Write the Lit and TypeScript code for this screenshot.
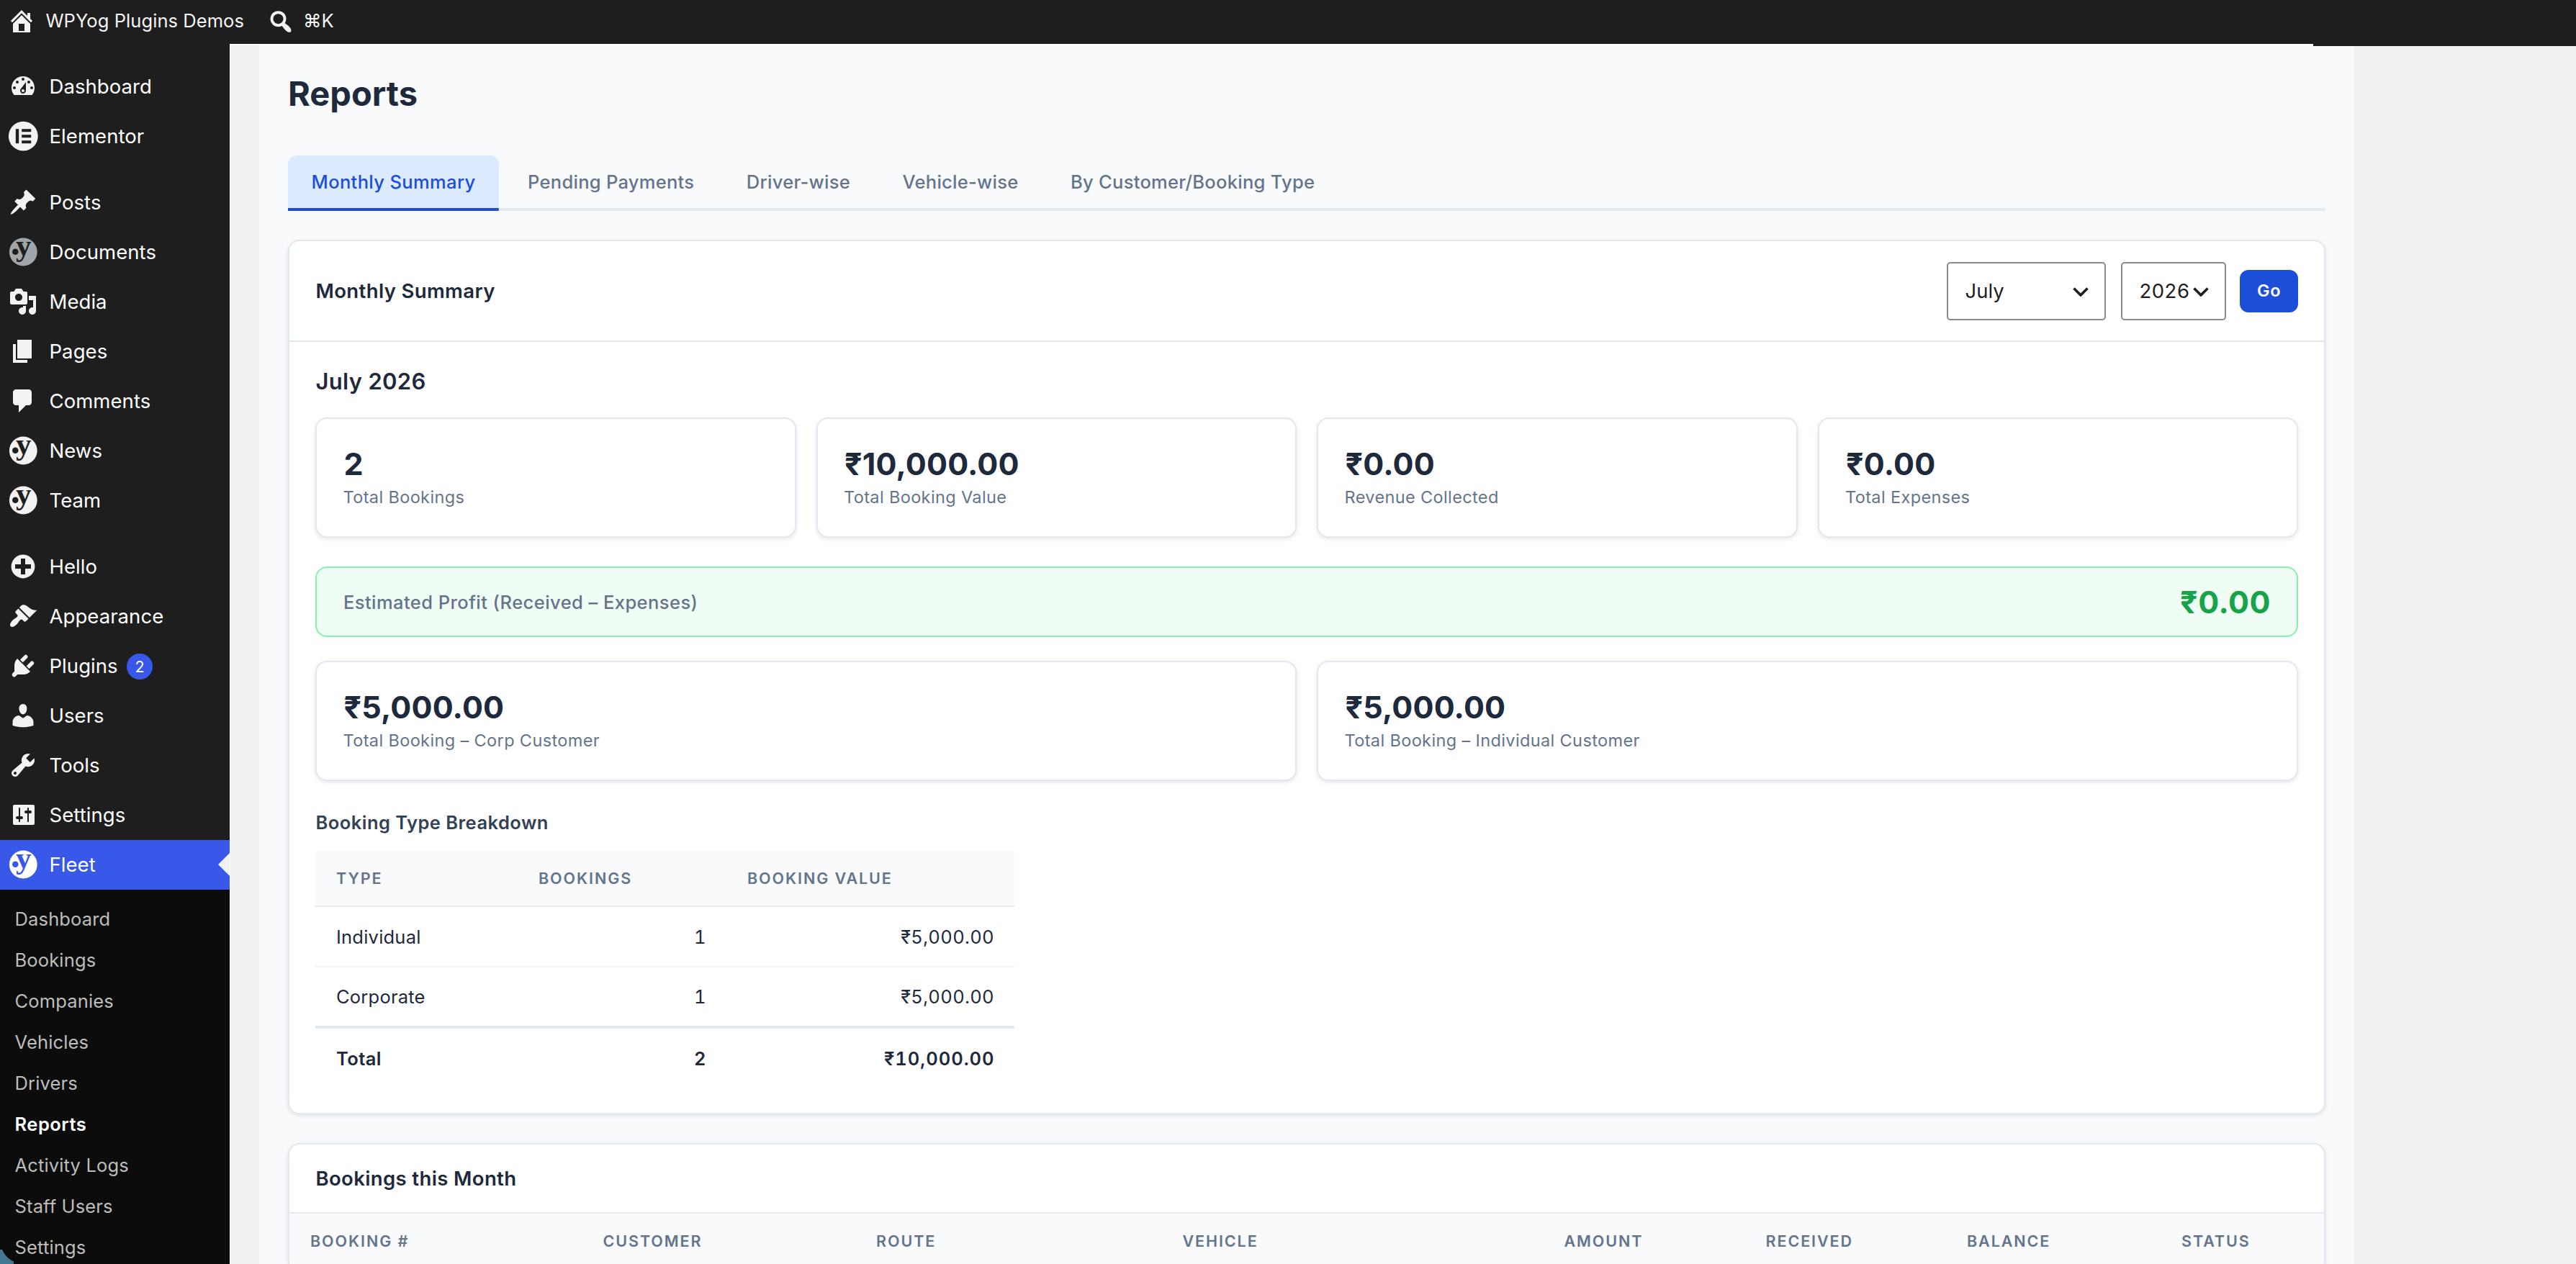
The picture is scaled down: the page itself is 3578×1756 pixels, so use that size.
import { LitElement, html, css, svg, nothing } from "lit";
import { customElement, property } from "lit/decorators.js";
import { classMap } from "lit/directives/class-map.js";

const ICONS: Record<string, string> = {
  home: "M16 8.5l1.53 1.53-1.06 1.06L10 4.6l-6.47 6.49-1.06-1.06L10 2.5l4 4v-2h2v4zm-6-2.46l6 5.99V18H4v-5.97zM12 17v-5H8v5h4z",
  search:
    "M12.14 4.18c1.87 1.87 2.11 4.75.72 6.89.12.1.22.21.36.31.2.16.47.36.81.59.34.24.56.39.66.47.42.31.73.57.94.78.32.32.6.65.84 1 .25.35.44.69.59 1.04.14.35.21.68.18 1-.02.32-.14.59-.36.81s-.49.34-.81.36c-.31.02-.65-.04-.99-.19-.35-.14-.7-.34-1.04-.59-.35-.24-.68-.52-1-.84-.21-.21-.47-.52-.77-.93-.1-.13-.25-.35-.47-.66-.22-.32-.4-.57-.56-.78-.16-.2-.29-.35-.44-.5-2.07 1.09-4.69.76-6.44-.98-2.14-2.15-2.14-5.64 0-7.78 2.15-2.15 5.63-2.15 7.78 0zm-1.41 6.36c1.36-1.37 1.36-3.58 0-4.95-1.37-1.37-3.59-1.37-4.95 0-1.37 1.37-1.37 3.58 0 4.95 1.36 1.37 3.58 1.37 4.95 0z",
  dashboard:
    "M3.76 16h12.48c1.1-1.37 1.76-3.11 1.76-5 0-4.42-3.58-8-8-8s-8 3.58-8 8c0 1.89.66 3.63 1.76 5zM10 4c.55 0 1 .45 1 1s-.45 1-1 1-1-.45-1-1 .45-1 1-1zM6 6c.55 0 1 .45 1 1s-.45 1-1 1-1-.45-1-1 .45-1 1-1zm8 0c.55 0 1 .45 1 1s-.45 1-1 1-1-.45-1-1 .45-1 1-1zm-5.37 5.55L12 7v6c0 1.1-.9 2-2 2s-2-.9-2-2c0-.57.24-1.08.63-1.45zM4 10c.55 0 1 .45 1 1s-.45 1-1 1-1-.45-1-1 .45-1 1-1zm12 0c.55 0 1 .45 1 1s-.45 1-1 1-1-.45-1-1 .45-1 1-1zm-5 3c0-.55-.45-1-1-1s-1 .45-1 1 .45 1 1 1 1-.45 1-1z",
  post: "M10.44 3.02l1.82-1.82 6.36 6.35-1.83 1.82c-1.05-.68-2.48-.57-3.41.36l-.75.75c-.92.93-1.04 2.35-.35 3.41l-1.83 1.82-2.41-2.41-2.8 2.79c-.42.42-3.38 2.71-3.8 2.29s1.86-3.39 2.28-3.81l2.79-2.79L4.1 9.36l1.83-1.82c1.05.69 2.48.57 3.4-.36l.75-.75c.93-.92 1.05-2.35.36-3.41z",
  media:
    "M13 11V4c0-.55-.45-1-1-1h-1.67L9 1H5L3.67 3H2c-.55 0-1 .45-1 1v7c0 .55.45 1 1 1h10c.55 0 1-.45 1-1zM7 4.5c1.38 0 2.5 1.12 2.5 2.5S8.38 9.5 7 9.5 4.5 8.38 4.5 7 5.62 4.5 7 4.5zM14 6h5v10.5c0 1.38-1.12 2.5-2.5 2.5S14 17.88 14 16.5s1.12-2.5 2.5-2.5c.17 0 .34.02.5.05V9h-3V6zm-4 8.05V13h2v3.5c0 1.38-1.12 2.5-2.5 2.5S7 17.88 7 16.5 8.12 14 9.5 14c.17 0 .34.02.5.05z",
  page: "M6 15V2h10v13H6zm-1 1h8v2H3V5h2v11z",
  comments: "M5 2h9c1.1 0 2 .9 2 2v7c0 1.1-.9 2-2 2h-2l-5 5v-5H5c-1.1 0-2-.9-2-2V4c0-1.1.9-2 2-2z",
  plus: "M15.8 4.2c3.2 3.21 3.2 8.39 0 11.6-3.21 3.2-8.39 3.2-11.6 0C1 12.59 1 7.41 4.2 4.2 7.41 1 12.59 1 15.8 4.2zm-4.3 11.3v-4h4v-3h-4v-4h-3v4h-4v3h4v4h3z",
  appearance:
    "M14.48 11.06L7.41 3.99l1.5-1.5c.5-.56 2.3-.47 3.51.32 1.21.8 1.43 1.28 2.91 2.1 1.18.64 2.45 1.26 4.45.85zm-.71.71L6.7 4.7 4.93 6.47c-.39.39-.39 1.02 0 1.41l1.06 1.06c.39.39.39 1.03 0 1.42-.6.6-1.43 1.11-2.21 1.69-.35.26-.7.53-1.01.84C1.43 14.23.4 16.08 1.4 17.07c.99 1 2.84-.03 4.18-1.36.31-.31.58-.66.85-1.02.57-.78 1.08-1.61 1.69-2.21.39-.39 1.02-.39 1.41 0l1.06 1.06c.39.39 1.02.39 1.41 0z",
  plugins:
    "M13.11 4.36L9.87 7.6 8 5.73l3.24-3.24c.35-.34 1.05-.2 1.56.32.52.51.66 1.21.31 1.55zm-8 1.77l.91-1.12 9.01 9.01-1.19.84c-.71.71-2.63 1.16-3.82 1.16H6.14L4.9 17.26c-.59.59-1.54.59-2.12 0-.59-.58-.59-1.53 0-2.12l1.24-1.24v-3.88c0-1.13.4-3.19 1.09-3.89zm7.26 3.97l3.24-3.24c.34-.35 1.04-.21 1.55.31.52.51.66 1.21.31 1.55l-3.24 3.25z",
  users:
    "M10 9.25c-2.27 0-2.73-3.44-2.73-3.44C7 4.02 7.82 2 9.97 2c2.16 0 2.98 2.02 2.71 3.81 0 0-.41 3.44-2.68 3.44zm0 2.57L12.72 10c2.39 0 4.52 2.33 4.52 4.53v2.49s-3.65 1.13-7.24 1.13c-3.65 0-7.24-1.13-7.24-1.13v-2.49c0-2.25 1.94-4.48 4.47-4.48z",
  tools:
    "M16.68 9.77c-1.34 1.34-3.3 1.67-4.95.99l-5.41 6.52c-.99.99-2.59.99-3.58 0s-.99-2.59 0-3.57l6.52-5.42c-.68-1.65-.35-3.61.99-4.95 1.28-1.28 3.12-1.62 4.72-1.06l-2.89 2.89 2.82 2.82 2.86-2.87c.53 1.58.18 3.39-1.08 4.65zM3.81 16.21c.4.39 1.04.39 1.43 0 .4-.4.4-1.04 0-1.43-.39-.4-1.03-.4-1.43 0-.39.39-.39 1.03 0 1.43z",
  settings:
    "M18 16V4c0-.55-.45-1-1-1H4c-.55 0-1 .45-1 1v12c0 .55.45 1 1 1h13c.55 0 1-.45 1-1zM8 11h1c.55 0 1 .45 1 1s-.45 1-1 1H8v1.5c0 .28-.22.5-.5.5s-.5-.22-.5-.5V13H6c-.55 0-1-.45-1-1s.45-1 1-1h1V5.5c0-.28.22-.5.5-.5s.5.22.5.5V11zm5-2h-1c-.55 0-1-.45-1-1s.45-1 1-1h1v-1.500c0-.28.22-.5.5-.5s.5.22.5.5V7h1c.55 0 1 .45 1 1s-.45 1-1 1h-1v5.500c0 .28-.22.5-.5.5s-.5-.22-.5-.5V9z",
};

@customElement("fleet-icon")
class FleetIcon extends LitElement {
  @property() name = "";

  static styles = css`
    :host {
      display: block;
      width: 40px;
      height: 40px;
    }
    svg {
      display: block;
      width: 100%;
      height: 100%;
      overflow: visible;
      fill: currentColor;
    }
    .cut {
      fill: var(--icon-cut, #1e1e1e);
    }
    .mark {
      font-family: "Liberation Serif", serif;
      font-weight: 700;
      font-size: 43px;
    }
  `;

  render() {
    if (this.name === "elementor") {
      return html`<svg viewBox="0 0 40 40">
        <circle cx="20.3" cy="20.2" r="20.4" />
        <g class="cut">
          <rect x="9.8" y="10.2" width="4.4" height="20" />
          <rect x="18.2" y="10.2" width="13" height="4" />
          <rect x="18.2" y="18.2" width="13" height="4" />
          <rect x="18.2" y="26.2" width="13" height="4" />
        </g>
      </svg>`;
    }
    if (this.name === "yoast") {
      return html`<svg viewBox="0 0 40 40">
        <circle cx="20.3" cy="20" r="19.4" />
        <g class="cut">
          <circle cx="9.3" cy="19.8" r="4.3" />
          <text class="mark" x="10" y="24.5">y</text>
        </g>
      </svg>`;
    }
    return html`<svg viewBox="0 0 20 20">${svg`<path d=${ICONS[this.name] ?? ""} />`}</svg>`;
  }
}

interface MenuItem {
  icon: string;
  label: string;
  gapBefore?: boolean;
  badge?: string;
  active?: boolean;
  dim?: boolean;
}

const MENU: MenuItem[] = [
  { icon: "dashboard", label: "Dashboard" },
  { icon: "elementor", label: "Elementor" },
  { icon: "post", label: "Posts", gapBefore: true },
  { icon: "yoast", label: "Documents", dim: true },
  { icon: "media", label: "Media" },
  { icon: "page", label: "Pages" },
  { icon: "comments", label: "Comments" },
  { icon: "yoast", label: "News" },
  { icon: "yoast", label: "Team" },
  { icon: "plus", label: "Hello", gapBefore: true },
  { icon: "appearance", label: "Appearance" },
  { icon: "plugins", label: "Plugins", badge: "2" },
  { icon: "users", label: "Users" },
  { icon: "tools", label: "Tools" },
  { icon: "settings", label: "Settings" },
  { icon: "yoast", label: "Fleet", active: true },
];

const SUBMENU = [
  "Dashboard",
  "Bookings",
  "Companies",
  "Vehicles",
  "Drivers",
  "Reports",
  "Activity Logs",
  "Staff Users",
  "Settings",
];

@customElement("admin-menu")
class AdminMenu extends LitElement {
  static styles = css`
    :host {
      display: flex;
      flex-direction: column;
      width: 319px;
      flex: none;
      background: #1e1e1e;
      color: #fff;
      padding-top: 24px;
      box-sizing: border-box;
    }
    .item {
      display: flex;
      align-items: center;
      height: 69.07px;
      flex: none;
      padding-left: 12px;
      gap: 16px;
      font-size: 27.5px;
      letter-spacing: 0.06px;
      position: relative;
    }
    .item fleet-icon {
      color: #f3f1f1;
    }
    .item.gap {
      margin-top: 23px;
    }
    .item.dim fleet-icon {
      color: #a0a6aa;
    }
    .item.active {
      background: #3858e9;
      --icon-cut: #3858e9;
    }
    .item.active fleet-icon {
      color: #fff;
    }
    .item.active::after {
      content: "";
      position: absolute;
      right: 0;
      top: 50%;
      transform: translateY(-50%);
      border: 16px solid transparent;
      border-right-color: #f0f0f0;
      border-left-width: 0;
    }
    .label {
      white-space: nowrap;
      padding-left: 0.5px;
    }
    .badge {
      margin-left: -4px;
      margin-top: 2px;
      width: 36.5px;
      height: 36.5px;
      border-radius: 50%;
      background: #3858e9;
      display: flex;
      align-items: center;
      justify-content: center;
      font-size: 21.5px;
      letter-spacing: 0;
    }
    .submenu {
      flex: 1;
      background: #0c0c0c;
      padding-top: 12px;
      overflow: hidden;
    }
    .sub {
      height: 57.05px;
      line-height: 57.05px;
      padding-left: 20.5px;
      font-size: 25.5px;
      letter-spacing: 0.15px;
      color: #bdbdbd;
      white-space: nowrap;
    }
    .sub.current {
      color: #fff;
      font-weight: 600;
      letter-spacing: 0.5px;
    }
  `;

  render() {
    return html`
      ${MENU.map(
        (m) => html`<div
          class=${classMap({ item: true, gap: !!m.gapBefore, dim: !!m.dim, active: !!m.active })}
        >
          <fleet-icon name=${m.icon}></fleet-icon>
          <span class="label">${m.label}</span>
          ${m.badge ? html`<span class="badge">${m.badge}</span>` : nothing}
        </div>`
      )}
      <div class="submenu">
        ${SUBMENU.map(
          (s) => html`<div class=${classMap({ sub: true, current: s === "Reports" })}>${s}</div>`
        )}
      </div>
    `;
  }
}

@customElement("stat-card")
class StatCard extends LitElement {
  @property() value = "";
  @property() label = "";

  static styles = css`
    :host {
      display: block;
      box-sizing: border-box;
      height: 167px;
      padding: 36px;
      background: #fff;
      border: 2px solid #e2e8f0;
      border-radius: 16px;
      box-shadow: 0 2px 6px rgba(0, 0, 0, 0.1);
    }
    .value {
      font-size: 43px;
      font-weight: 700;
      line-height: 52px;
      letter-spacing: 0.2px;
      color: #1e293b;
      padding-left: 1.5px;
    }
    .label {
      margin-top: 2px;
      font-size: 23.5px;
      line-height: 38px;
      letter-spacing: 0.37px;
      color: #64748b;
      padding-left: 0.5px;
    }
  `;

  render() {
    return html`<div class="value">${this.value}</div>
      <div class="label">${this.label}</div>`;
  }
}

const chevron = html`<svg class="chevron" viewBox="0 0 22 13">
  <path d="M1.5 1.5 L11 11 L20.5 1.5" />
</svg>`;

@customElement("reports-page")
class ReportsPage extends LitElement {
  static styles = css`
    :host {
      display: block;
      box-sizing: border-box;
      width: 2910px;
      padding: 27px 40px 0;
      background: #f8fafc;
      color: #1e293b;
    }
    .title {
      font-size: 47px;
      font-weight: 700;
      line-height: 80px;
    }
    .tabs {
      display: flex;
      gap: 8px;
      margin-top: 46px;
      border-bottom: 4px solid #e2e8f0;
    }
    .tab {
      padding: 0 32px 0 32.5px;
      line-height: 74px;
      height: 73px;
      border-bottom: 4px solid transparent;
      margin-bottom: -4px;
      border-radius: 12px 12px 0 0;
      font-size: 25.5px;
      font-weight: 500;
      letter-spacing: 0.28px;
      color: #64748b;
      white-space: nowrap;
    }
    .tab.on {
      background: linear-gradient(#1d4ed8, #1d4ed8) bottom / 100% 4px no-repeat border-box, #dbeafe;
      color: #1d4ed8;
      letter-spacing: 0.36px;
    }
    .card {
      margin-top: 40px;
      background: #fff;
      border: 2px solid #e2e8f0;
      border-radius: 16px;
      box-shadow: 0 2px 6px rgba(0, 0, 0, 0.1);
      overflow: hidden;
    }
    .card-head {
      display: flex;
      align-items: center;
      justify-content: space-between;
      height: 138px;
      padding: 0 36px;
      border-bottom: 2px solid #e2e8f0;
    }
    .card-head.short {
      height: 94px;
    }
    .card-title {
      font-size: 27.5px;
      font-weight: 600;
      letter-spacing: 0.37px;
      padding-left: 0.5px;
    }
    .filters {
      display: flex;
      align-items: center;
    }
    .select {
      box-sizing: border-box;
      display: flex;
      align-items: center;
      justify-content: space-between;
      height: 81px;
      border: 2px solid #8a8a8a;
      border-radius: 5px;
      font-size: 27.5px;
      color: #1e1e1e;
      padding: 0 22px 0 23.5px;
    }
    .month {
      width: 221px;
      margin-right: 21px;
    }
    .year {
      width: 146px;
      margin-right: 19px;
      letter-spacing: 0.5px;
    }
    .chevron {
      width: 22px;
      height: 13px;
      fill: none;
      stroke: #1e1e1e;
      stroke-width: 3.6px;
      margin-top: 3px;
    }
    .go {
      width: 81px;
      height: 59px;
      border-radius: 12px;
      background: #1d4ed8;
      color: #fff;
      font-size: 23.5px;
      font-weight: 600;
      line-height: 58px;
      text-align: center;
      letter-spacing: 0.5px;
    }
    .body {
      padding: 32px 36px 35px;
    }
    .period {
      font-size: 31px;
      font-weight: 600;
      line-height: 46px;
      letter-spacing: 0.32px;
      padding-left: 0.5px;
    }
    .stats {
      display: grid;
      grid-template-columns: repeat(4, 1fr);
      gap: 28px;
      margin-top: 27px;
    }
    .stats.two {
      grid-template-columns: repeat(2, 1fr);
      margin-top: 33px;
    }
    .profit {
      display: flex;
      align-items: center;
      justify-content: space-between;
      box-sizing: border-box;
      height: 98px;
      margin-top: 40px;
      padding: 0 36px;
      border: 2px solid #86efac;
      border-radius: 16px;
      background: #f0fdf4;
    }
    .profit-label {
      font-size: 25.5px;
      font-weight: 500;
      letter-spacing: 0.44px;
      color: #64748b;
      padding-left: 1px;
    }
    .profit-value {
      font-size: 43px;
      font-weight: 700;
      letter-spacing: 0.5px;
      color: #16a34a;
    }
    .subhead {
      margin-top: 38px;
      font-size: 25.5px;
      font-weight: 600;
      line-height: 40px;
      letter-spacing: 0.47px;
      color: #334155;
      padding-left: 0.5px;
    }
    .row {
      display: grid;
      align-items: center;
      box-sizing: border-box;
    }
    .head {
      height: 78.5px;
      border-bottom: 2px solid #e2e8f0;
      background: #f8fafc;
      font-size: 21.5px;
      font-weight: 600;
      letter-spacing: 1.92px;
      color: #64748b;
    }
    .row > div {
      padding: 0 28px 0 29px;
      white-space: nowrap;
    }
    .breakdown {
      width: 971px;
      margin-top: 18.5px;
    }
    .breakdown .row {
      grid-template-columns: 281px 290px 400px;
    }
    .data {
      height: 84px;
      border-bottom: 2px solid #f1f5f9;
      font-size: 25.5px;
      letter-spacing: 0.22px;
      color: #1e293b;
    }
    .data .num {
      text-align: right;
      font-variant-numeric: tabular-nums;
      letter-spacing: 0.35px;
    }
    .data.before-total {
      height: 81px;
      border-bottom: 0;
    }
    .data.total {
      height: 86px;
      border-top: 4px solid #e2e8f0;
      border-bottom: 0;
      font-weight: 600;
      letter-spacing: 0.4px;
    }
    .data.total .num {
      letter-spacing: 1px;
      padding-right: 27.5px;
    }
    .bookings {
      grid-template-columns: 406.5px 379.5px 425.5px 530px 280px 279.5px 298px 1fr;
    }
  `;

  private tabs = [
    "Monthly Summary",
    "Pending Payments",
    "Driver-wise",
    "Vehicle-wise",
    "By Customer/Booking Type",
  ];

  private rows = [
    { type: "Individual", count: "1", value: "₹5,000.00", cls: "" },
    { type: "Corporate", count: "1", value: "₹5,000.00", cls: "before-total" },
    { type: "Total", count: "2", value: "₹10,000.00", cls: "total" },
  ];

  private columns = [
    "BOOKING #",
    "CUSTOMER",
    "ROUTE",
    "VEHICLE",
    "AMOUNT",
    "RECEIVED",
    "BALANCE",
    "STATUS",
  ];

  render() {
    return html`
      <div class="title">Reports</div>
      <div class="tabs">
        ${this.tabs.map((t, i) => html`<div class=${classMap({ tab: true, on: i === 0 })}>${t}</div>`)}
      </div>

      <section class="card">
        <div class="card-head">
          <span class="card-title">Monthly Summary</span>
          <div class="filters">
            <div class="select month"><span>July</span>${chevron}</div>
            <div class="select year"><span>2026</span>${chevron}</div>
            <div class="go">Go</div>
          </div>
        </div>
        <div class="body">
          <div class="period">July 2026</div>
          <div class="stats">
            <stat-card value="2" label="Total Bookings"></stat-card>
            <stat-card value="₹10,000.00" label="Total Booking Value"></stat-card>
            <stat-card value="₹0.00" label="Revenue Collected"></stat-card>
            <stat-card value="₹0.00" label="Total Expenses"></stat-card>
          </div>
          <div class="profit">
            <span class="profit-label">Estimated Profit (Received – Expenses)</span>
            <span class="profit-value">₹0.00</span>
          </div>
          <div class="stats two">
            <stat-card value="₹5,000.00" label="Total Booking – Corp Customer"></stat-card>
            <stat-card value="₹5,000.00" label="Total Booking – Individual Customer"></stat-card>
          </div>
          <div class="subhead">Booking Type Breakdown</div>
          <div class="breakdown">
            <div class="row head">
              <div>TYPE</div>
              <div>BOOKINGS</div>
              <div>BOOKING VALUE</div>
            </div>
            ${this.rows.map(
              (r) => html`<div class="row data ${r.cls}">
                <div>${r.type}</div>
                <div class="num">${r.count}</div>
                <div class="num">${r.value}</div>
              </div>`
            )}
          </div>
        </div>
      </section>

      <section class="card">
        <div class="card-head short"><span class="card-title">Bookings this Month</span></div>
        <div class="row head bookings">${this.columns.map((c) => html`<div>${c}</div>`)}</div>
      </section>
    `;
  }
}

@customElement("app-root")
class AppRoot extends LitElement {
  static styles = css`
    :host {
      display: flex;
      flex-direction: column;
      position: relative;
      width: 3578px;
      height: 1756px;
      overflow: hidden;
      background: #f0f0f0;
      font-family: Inter, "Liberation Sans", sans-serif;
      --icon-cut: #1e1e1e;
    }
    .bar {
      display: flex;
      flex: none;
      height: 61px;
      background: #1e1e1e;
      color: #f5f5f5;
      font-size: 25.5px;
      line-height: 58px;
      letter-spacing: 0.07px;
    }
    .bar .home {
      margin: 9px 13px 0 10.4px;
    }
    .bar .find {
      margin: 9.5px 11.5px 0 30.5px;
    }
    .bar fleet-icon {
      color: #f3f1f1;
    }
    .main {
      display: flex;
      flex: 1;
      min-height: 0;
    }
    .content {
      flex: 1;
      border-top: 2px solid #fff;
      border-left: 1px solid #fcfcfc;
      padding-left: 40px;
      min-width: 0;
    }
    .bar-edge {
      position: absolute;
      left: 3213px;
      right: 0;
      top: 61px;
      height: 3px;
      background: #1e1e1e;
    }
    .corner {
      position: absolute;
      left: 0;
      bottom: 0;
      width: 19px;
      height: 20px;
      background: radial-gradient(circle 30px at 31px -11px, transparent 29.5px, #42788f 30.5px);
    }
  `;

  render() {
    return html`
      <header class="bar">
        <fleet-icon class="home" name="home"></fleet-icon>
        <span>WPYog Plugins Demos</span>
        <fleet-icon class="find" name="search"></fleet-icon>
        <span>⌘K</span>
      </header>
      <div class="main">
        <admin-menu></admin-menu>
        <main class="content"><reports-page></reports-page></main>
      </div>
      <div class="bar-edge"></div>
      <div class="corner"></div>
    `;
  }
}
